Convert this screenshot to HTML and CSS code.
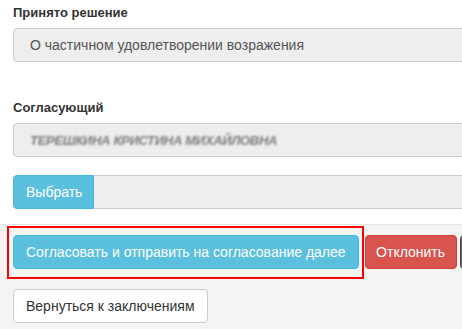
FILE: index.html
```html
<!DOCTYPE html>
<html>
  <head>
    <meta charset="utf-8" />
    <title>Согласование</title>
    <meta name="viewport" content="width=device-width, initial-scale=1.0" />
    <link rel="stylesheet" href="styles.css">
  </head>
  <body>
    <div class="form">
      <div class="group first">
        <label class="label">Принято решение</label>
        <div class="field">О частичном удовлетворении возражения</div>
      </div>

      <div class="group">
        <label class="label">Согласующий</label>
        <div class="field"><span class="blurred">Терешкина Кристина Михайловна</span></div>
      </div>

      <div class="input-group">
        <button class="btn btn-info">Выбрать</button>
        <div class="field addon"></div>
      </div>
    </div>

    <div class="footer">
      <div class="row">
        <div class="highlighted">
          <button class="btn btn-info">Согласовать и отправить на согласование далее</button>
        </div>
        <button class="btn btn-danger">Отклонить</button>
        <button class="btn btn-dark" title="Отмена"></button>
      </div>
      <div class="row">
        <button class="btn btn-default">Вернуться к заключениям</button>
      </div>
    </div>
  </body>
</html>
```

FILE: styles.css
```css
html, body {
  margin: 0;
  overflow: hidden;
}
body {
  font-family: "Liberation Sans", Arial, sans-serif;
  font-size: 14px;
  line-height: 20px;
  color: #333;
  background: #f4f4f4;
  width: 462px;
  height: 329px;
}
.form {
  background: #fff;
  padding: 3px 0 15px 13px;
  width: 620px;
}
.group {
  margin-bottom: 18px;
}
.group.first {
  margin-bottom: 36px;
}
.label {
  display: block;
  font-weight: bold;
  font-size: 13px;
  margin-bottom: 5px;
}
.field {
  box-sizing: border-box;
  height: 34px;
  padding: 6px 16px;
  background: #eee;
  border: 1px solid #ccc;
  border-radius: 4px;
  color: #555;
  white-space: nowrap;
  overflow: hidden;
}
.blurred {
  display: inline-block;
  color: #7a7a7a;
  font-weight: bold;
  font-style: italic;
  text-transform: uppercase;
  letter-spacing: -0.3px;
  font-size: 13px;
  filter: blur(1.2px);
}
.input-group {
  display: flex;
}
.input-group .btn {
  border-radius: 4px 0 0 4px;
  width: 81px;
}
.input-group .addon {
  flex: 1;
  border-left: 0;
  border-radius: 0 4px 4px 0;
}
.btn {
  box-sizing: border-box;
  height: 34px;
  padding: 6px 12px;
  font-family: inherit;
  font-size: 14px;
  line-height: 20px;
  border: 1px solid transparent;
  border-radius: 4px;
  white-space: nowrap;
  cursor: pointer;
}
.btn-info {
  background: #5bc0de;
  border-color: #46b8da;
  color: #fff;
}
.btn-danger {
  background: #d9534f;
  border-color: #d43f3a;
  color: #fff;
  width: 92px;
  padding: 6px 0;
}
.btn-dark {
  background: #666;
  border-color: #444;
  width: 90px;
}
.btn-default {
  background: #fff;
  border-color: #ccc;
  color: #333;
}
.footer {
  border-top: 1px solid #e5e5e5;
  padding: 10px 0 0 13px;
  width: 620px;
}
.row {
  display: flex;
  gap: 3px;
  margin-bottom: 20px;
}
.highlighted {
  position: relative;
  margin-right: 3px;
}
.highlighted::after {
  content: "";
  position: absolute;
  left: -6px;
  top: -9px;
  width: 353px;
  height: 49px;
  border: 2px solid #f00;
}
```
